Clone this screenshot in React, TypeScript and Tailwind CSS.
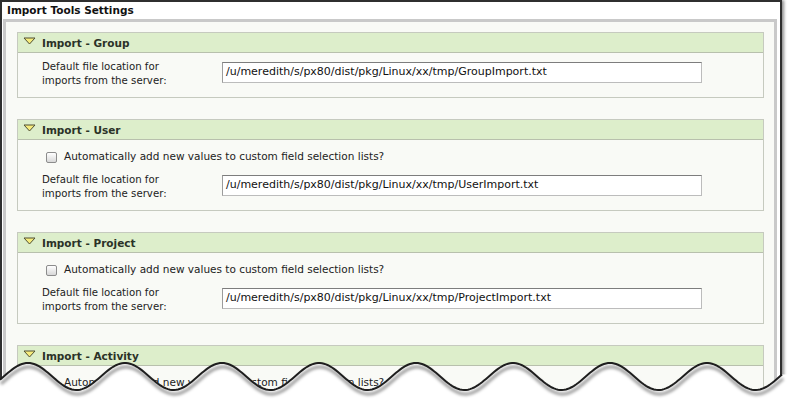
import React from "react";

interface ImportSection {
  title: string;
  hasCheckbox: boolean;
  file: string;
}

const sections: ImportSection[] = [
  { title: "Import - Group", hasCheckbox: false, file: "GroupImport.txt" },
  { title: "Import - User", hasCheckbox: true, file: "UserImport.txt" },
  { title: "Import - Project", hasCheckbox: true, file: "ProjectImport.txt" },
  { title: "Import - Activity", hasCheckbox: true, file: "ActivityImport.txt" },
];

const BASE_PATH = "/u/meredith/s/px80/dist/pkg/Linux/xx/tmp/";

// torn-paper edge across the bottom of the screenshot
const waveY = (x: number) => 36.5 - 13.5 * Math.cos((2 * Math.PI * (x - 28)) / 97);

const buildWave = () => {
  const pts: string[] = [];
  for (let x = 0; x <= 782; x += 2) {
    pts.push(`${x},${waveY(x).toFixed(2)}`);
  }
  const line = "M" + pts.join(" L");
  const fill = `${line} L792,${waveY(782).toFixed(2)} L792,61 L0,61 Z`;
  return { line, fill };
};

const Triangle = () => (
  <svg width="13" height="8" viewBox="0 0 13 8" className="mt-[4px] shrink-0">
    <path d="M1 1 L12 1 L6.5 7 Z" fill="#f6ec7c" stroke="#4f4f33" strokeWidth="1" strokeLinejoin="round" />
  </svg>
);

const Checkbox = () => (
  <div className="w-[11px] h-[11px] rounded-[2px] border border-[#8c8c8c] bg-linear-to-b from-white to-[#d8d8d8]" />
);

const SectionBox = ({ section }: { section: ImportSection }) => (
  <div className="mb-[21px] border border-[#c6cabf]">
    <div className="h-[20px] flex items-start gap-[6px] pl-[5px] bg-[#ddeecb] border-b border-[#b8c0ad]">
      <Triangle />
      <span className="font-bold text-[10.5px] leading-[20px] text-[#2b3227]">{section.title}</span>
    </div>
    <div className="pt-[4px] pb-[10px] pl-[24px] bg-[#f9faf6]">
      {section.hasCheckbox && (
        <div className="h-[26px] flex items-center gap-[7px] pl-[4px]">
          <Checkbox />
          <span className="text-[10.5px] text-[#222]">
            Automatically add new values to custom field selection lists?
          </span>
        </div>
      )}
      <div className="h-[30px] flex items-center">
        <div className="w-[180px] text-[10.2px] leading-[14px] text-[#222] pt-[3px]">
          Default file location for
          <br />
          imports from the server:
        </div>
        <div className="w-[480px] h-[21px] flex items-center pl-[3px] bg-white border border-[#bcbcbc] border-t-[#7d7d7d] border-l-[#9c9c9c] text-[11px] text-[#111] whitespace-nowrap overflow-hidden">
          {BASE_PATH + section.file}
        </div>
      </div>
    </div>
  </div>
);

const App = () => {
  const wave = buildWave();

  return (
    <div className="relative w-[792px] h-[401px] overflow-hidden bg-white font-['DejaVu_Sans',Verdana,sans-serif]">
      <div className="w-[782px] border-2 border-b-0 border-[#2f2f2f] bg-white shadow-[2px_0_3px_rgba(0,0,0,0.45)]">
        {/* Title bar */}
        <div className="h-[17px] flex items-center pl-[5px] font-bold text-[10.5px] text-[#111]">
          Import Tools Settings
        </div>

        {/* Settings panel */}
        <div className="ml-[1px] mr-[3px] border-[3px] border-[#c9c9c9] bg-[#f9faf6] pt-[10px] pl-[11px] pr-[10px] pb-[20px]">
          {sections.map((s) => (
            <SectionBox key={s.title} section={s} />
          ))}
        </div>
      </div>

      {/* Torn edge overlay */}
      <svg
        className="absolute left-0 top-[340px]"
        width="792"
        height="61"
        viewBox="0 0 792 61"
      >
        <defs>
          <filter id="tear-shadow" x="-5%" y="-50%" width="110%" height="200%">
            <feGaussianBlur stdDeviation="1.8" />
          </filter>
        </defs>
        <path d={wave.fill} fill="#ffffff" />
        <path
          d={wave.line}
          fill="none"
          stroke="#000"
          strokeOpacity="0.4"
          strokeWidth="3"
          transform="translate(1 4)"
          filter="url(#tear-shadow)"
        />
        <path d={wave.line} fill="none" stroke="#1e1e1e" strokeWidth="2" />
      </svg>
    </div>
  );
};

export default App;
